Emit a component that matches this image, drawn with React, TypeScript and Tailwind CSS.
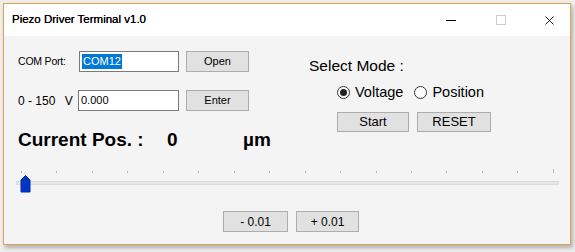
import { X } from 'lucide-react'

function Btn({ label, className }: { label: string; className: string }) {
  return (
    <button
      className={`flex items-center justify-center border border-[#adadad] bg-[#e1e1e1] text-black ${className}`}
    >
      {label}
    </button>
  )
}

function Radio({ checked, label }: { checked: boolean; label: string }) {
  return (
    <label className="flex items-center gap-[5px]">
      <span className="flex h-[13px] w-[13px] items-center justify-center rounded-full border border-[#333] bg-white">
        {checked ? <span className="h-[7px] w-[7px] rounded-full bg-[#222]" /> : null}
      </span>
      <span className="text-[14.5px] leading-none text-black">{label}</span>
    </label>
  )
}

export default function App() {
  const ticks = Array.from({ length: 16 }, (_, i) => i)

  return (
    <div
      className="h-[252px] w-[575px] bg-[#eeeeee] pl-[3px] pt-[3px]"
      style={{ fontFamily: '"Liberation Sans", Arial, sans-serif' }}
    >
      <div className="flex h-[242px] w-[568px] flex-col border border-[#e3a14c] shadow-[2px_3px_4px_rgba(0,0,0,0.25)]">
        {/* title bar */}
        <div className="flex h-[32px] items-center bg-white pl-[8px]">
          <span className="text-[11.5px] text-black [text-shadow:0_0_0.4px_#000]">Piezo Driver Terminal v1.0</span>
          <div className="ml-auto flex items-center">
            <span className="mr-[40px] h-[1px] w-[10px] bg-black" />
            <span className="mr-[36px] h-[10px] w-[10px] border border-[#cccccc]" />
            <X size={15} strokeWidth={1.4} className="mr-[13px] text-black" />
          </div>
        </div>

        {/* content */}
        <div className="flex flex-1 flex-col bg-[#f4f4f4]">
          <div className="flex">
            <div className="flex w-[300px] flex-col pl-[14px]">
              <div className="mt-[15px] flex h-[21px] items-center">
                <span className="w-[61px] text-[10.5px] tracking-[-0.2px] text-black">COM Port:</span>
                <div className="flex h-[21px] w-[100px] items-center border border-[#7a7a7a] bg-white pl-[2px]">
                  <span className="bg-[#0078d7] px-[1px] text-[11px] leading-[15px] text-white">COM12</span>
                </div>
                <Btn label="Open" className="ml-[7px] h-[21px] w-[63px] text-[11px]" />
              </div>
              <div className="mt-[18px] flex h-[21px] items-center">
                <span className="w-[60px] text-[12px] text-black">
                  0 - 150 <span className="ml-[6px]">V</span>
                </span>
                <div className="flex h-[21px] w-[101px] items-center border border-[#7a7a7a] bg-white pl-[2px]">
                  <span className="text-[11px] text-black">0.000</span>
                </div>
                <Btn label="Enter" className="ml-[7px] h-[21px] w-[63px] text-[11px]" />
              </div>
              <div className="mt-[17px] flex h-[24px] items-center text-[19px] font-bold text-black">
                <span className="w-[149px]">Current Pos. :</span>
                <span className="w-[76px]">0</span>
                <span>µm</span>
              </div>
            </div>

            <div className="flex flex-col pl-[5px]">
              <span className="mt-[21px] text-[15.5px] leading-[18px] text-black">Select Mode :</span>
              <div className="mt-[10px] flex items-center gap-[11px] pl-[28px]">
                <Radio checked label="Voltage" />
                <Radio checked={false} label="Position" />
              </div>
              <div className="mt-[12px] flex gap-[8px] pl-[28px]">
                <Btn label="Start" className="h-[20px] w-[72px] text-[13px]" />
                <Btn label="RESET" className="h-[20px] w-[74px] text-[13px]" />
              </div>
            </div>
          </div>

          {/* slider */}
          <div className="relative ml-[12px] mt-[17px] h-[22px] w-[543px]">
            <div className="flex h-[4px] items-end justify-between pl-[5px] pr-[5px]">
              {ticks.map((t) => (
                <span
                  key={t}
                  className={`w-[1px] bg-[#b5b5b5] ${t === 15 ? 'h-[4px]' : 'h-[2px]'}`}
                />
              ))}
            </div>
            <div className="mt-[8px] h-[4px] w-full border border-[#dcdcdc] bg-[#e6e6e6]" />
            <svg className="absolute left-[4px] top-[6px]" width="11" height="18" viewBox="0 0 11 18">
              <path d="M1 5 L5.5 0.5 L10 5 L10 17 L1 17 Z" fill="#0036c8" stroke="#002a9e" strokeWidth="1" />
            </svg>
          </div>

          <div className="mt-[20px] flex gap-[8px] pl-[219px]">
            <Btn label="- 0.01" className="h-[21px] w-[65px] text-[12px]" />
            <Btn label="+ 0.01" className="h-[21px] w-[63px] text-[12px]" />
          </div>
        </div>
      </div>
    </div>
  )
}
